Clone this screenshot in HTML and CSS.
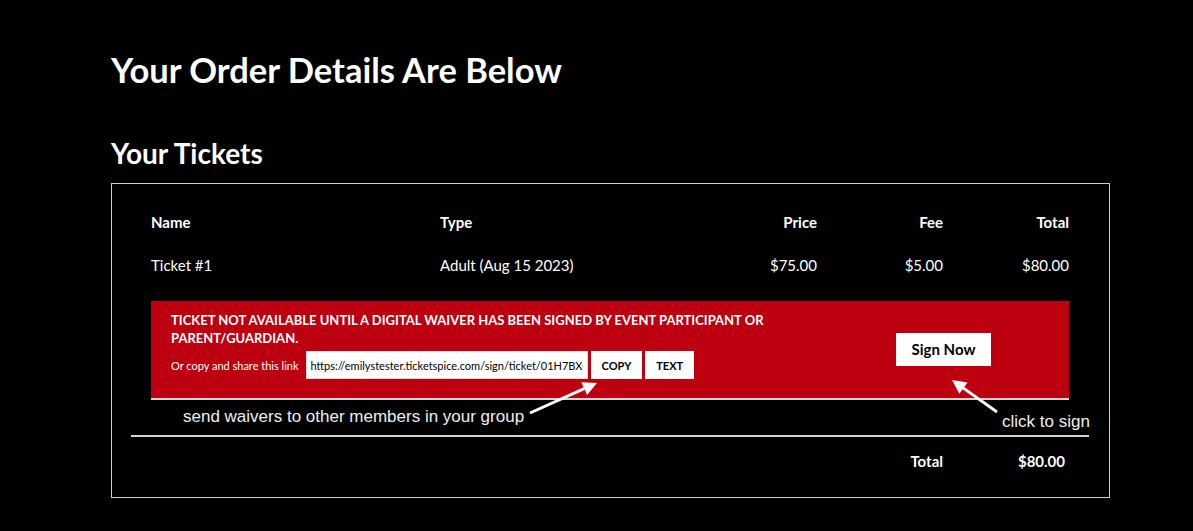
FILE: index.html
```html
<!DOCTYPE html>
<html lang="en">

<head>
    <meta charset="UTF-8">
    <meta name="viewport" content="width=device-width, initial-scale=1.0">
    <title>Your Order Details</title>
    <link rel="stylesheet" href="styles.css">
</head>

<body>
    <main class="page">
        <h1 class="page-title">Your Order Details Are Below</h1>
        <h2 class="section-title">Your Tickets</h2>

        <div class="tickets">
            <div class="ticket-grid ticket-head">
                <span>Name</span>
                <span>Type</span>
                <span class="num">Price</span>
                <span class="num">Fee</span>
                <span class="num">Total</span>
            </div>
            <div class="ticket-grid ticket-row">
                <span>Ticket #1</span>
                <span>Adult (Aug 15 2023)</span>
                <span class="num">$75.00</span>
                <span class="num">$5.00</span>
                <span class="num">$80.00</span>
            </div>

            <div class="waiver">
                <div class="waiver-info">
                    <p class="waiver-msg">Ticket not available until a digital waiver has been signed by event participant or parent/guardian.</p>
                    <div class="share">
                        <span class="share-label">Or copy and share this link</span>
                        <input class="share-link" type="text" readonly
                            value="https://emilystester.ticketspice.com/sign/ticket/01H7BXQ4M2K9">
                        <button type="button" class="share-btn">COPY</button>
                        <button type="button" class="share-btn">TEXT</button>
                    </div>
                </div>
                <button type="button" class="sign-btn">Sign Now</button>
            </div>

            <div class="order-total">
                <span class="total-label">Total</span>
                <span class="total-amount">$80.00</span>
            </div>

            <!-- annotations drawn over the screenshot -->
            <p class="note note-share">send waivers to other members in your group</p>
            <p class="note note-sign">click to sign</p>
            <svg class="arrows" width="998" height="312" viewBox="0 0 998 312">
                <line x1="418" y1="229" x2="472.2" y2="204.7" />
                <polygon points="485,199 475.1,211.1 469.3,198.3" />
                <line x1="885" y1="228" x2="851.4" y2="204.1" />
                <polygon points="840,196 855.5,198.4 847.3,209.8" />
            </svg>
        </div>
    </main>
</body>

</html>
```

FILE: styles.css
```css
body {
    font-family: Lato, "Open Sans", sans-serif;
    background-color: #000;
    color: #fff;
    margin: 0;
    padding: 0;
}

.page {
    width: 999px;
    margin-left: 111px;
    padding-top: 50px;
}

.page-title {
    font-size: 34.5px;
    line-height: 40px;
    font-weight: 700;
    margin: 0;
}

.section-title {
    font-size: 28px;
    line-height: 30px;
    font-weight: 700;
    margin: 48px 0 15px;
}

.tickets {
    position: relative;
    border: 1px solid #cfcfcf;
    padding: 28px 40px 0 39px;
}

.ticket-grid {
    display: grid;
    grid-template-columns: 289px 251px 126px 126px 126px;
    font-size: 15px;
    line-height: 20px;
}

.ticket-head {
    font-weight: 700;
}

.ticket-row {
    margin-top: 23px;
}

.num {
    text-align: right;
}

.waiver {
    display: flex;
    align-items: center;
    justify-content: space-between;
    margin-top: 26px;
    padding: 10px 78px 19px 20px;
    background-color: #bc0010;
    border-bottom: 2px solid #d4d4d4;
}

.waiver-info {
    max-width: 640px;
}

.waiver-msg {
    margin: 0;
    font-size: 13px;
    line-height: 18px;
    font-weight: 700;
    text-transform: uppercase;
}

.share {
    display: flex;
    align-items: center;
    gap: 3px;
    margin-top: 4px;
}

.share-label {
    font-size: 11px;
    margin-right: 4px;
}

.share-link {
    width: 282px;
    height: 28px;
    box-sizing: border-box;
    border: 1px solid #ddd;
    padding: 0 4px;
    font-family: Lato, sans-serif;
    font-size: 11px;
    color: #000;
    background: #fff;
}

.share-btn {
    height: 28px;
    padding: 0 11px;
    border: none;
    background: #fff;
    color: #000;
    font-family: Lato, sans-serif;
    font-size: 11px;
    font-weight: 700;
    cursor: pointer;
}

.sign-btn {
    width: 95px;
    height: 33px;
    margin-top: 8px;
    border: none;
    background: #fff;
    color: #000;
    font-family: Lato, sans-serif;
    font-size: 15px;
    font-weight: 700;
    cursor: pointer;
}

.order-total {
    display: flex;
    justify-content: flex-end;
    margin: 35px -20px 0;
    padding: 14px 24px 26px;
    border-top: 2px solid #d4d4d4;
    font-size: 15px;
    line-height: 20px;
    font-weight: 700;
}

.total-amount {
    width: 122px;
    text-align: right;
}

.note {
    position: absolute;
    margin: 0;
    font-family: "Liberation Sans", Arial, sans-serif;
    font-size: 17px;
    line-height: 20px;
    color: #eee;
}

.note-share {
    left: 71px;
    top: 223px;
}

.note-sign {
    left: 890px;
    top: 228px;
}

.arrows {
    position: absolute;
    left: 0;
    top: 0;
}

.arrows line {
    stroke: #fff;
    stroke-width: 3;
}

.arrows polygon {
    fill: #fff;
}
```
